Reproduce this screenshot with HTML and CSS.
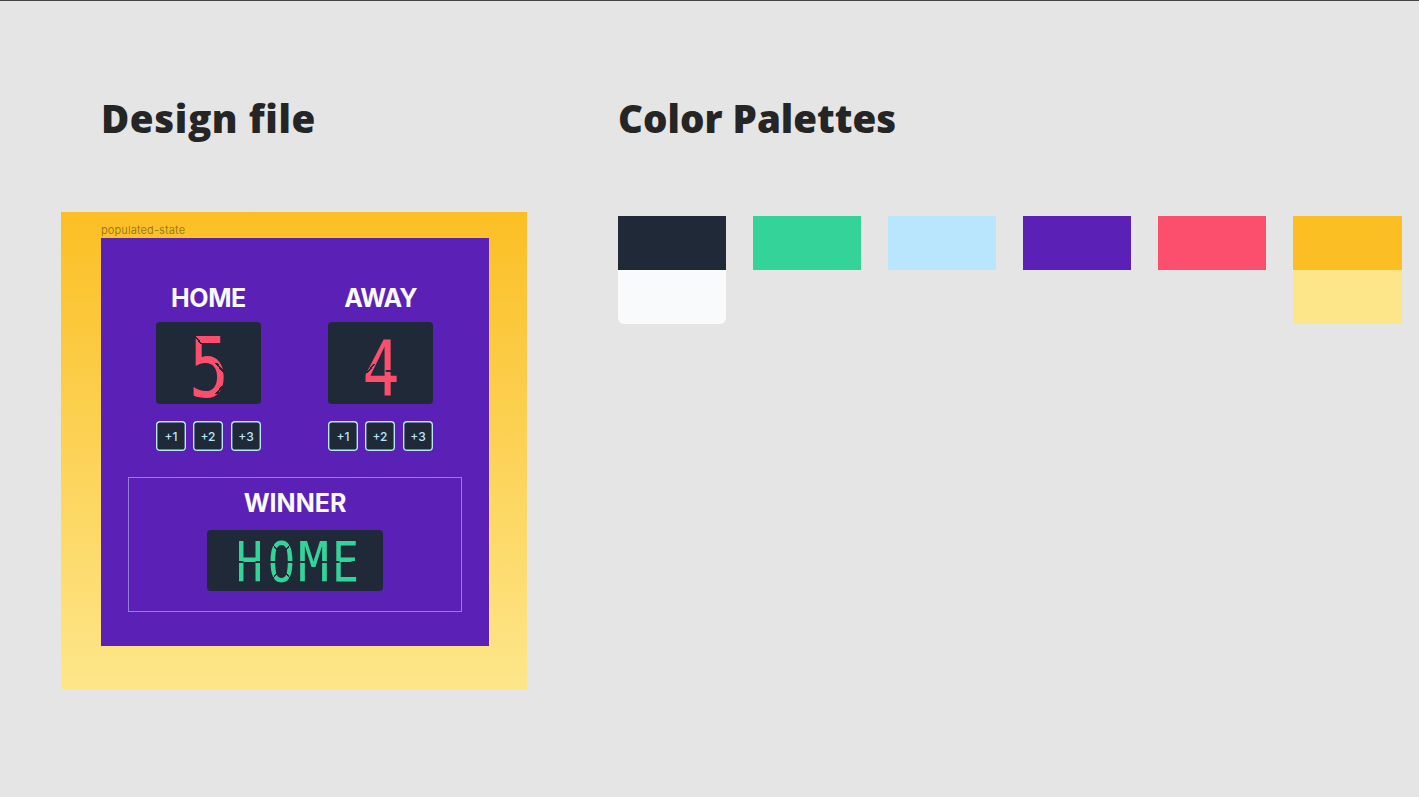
FILE: index.html
```html
<!DOCTYPE html>
<html lang="en">
<head>
<meta charset="utf-8">
<title>Scoreboard design</title>
<link rel="stylesheet" href="styles.css">
</head>
<body>
<main class="page">
  <section class="design">
    <h1 class="heading heading-design">Design file</h1>
    <div class="frame">
      <div class="frame-label">populated-state</div>
      <div class="board">
        <div class="teams">
          <div class="team">
            <h2 class="title home">HOME</h2>
            <div class="score"><span class="cell five">5</span></div>
            <div class="buttons"><button>+1</button><button>+2</button><button>+3</button></div>
          </div>
          <div class="team">
            <h2 class="title away">AWAY</h2>
            <div class="score"><span class="cell four">4</span></div>
            <div class="buttons"><button>+1</button><button>+2</button><button>+3</button></div>
          </div>
        </div>
        <div class="winner">
          <h2 class="title">WINNER</h2>
          <div class="result"><span class="cell split">H</span><span class="cell split corners">O</span><span class="cell split wide">M</span><span class="cell split">E</span></div>
        </div>
      </div>
    </div>
  </section>
  <section class="palettes">
    <h1 class="heading heading-palettes">Color Palettes</h1>
    <div class="swatches">
      <div class="group"><div class="swatch navy"></div><div class="swatch white"></div></div>
      <div class="group"><div class="swatch green"></div></div>
      <div class="group"><div class="swatch sky"></div></div>
      <div class="group"><div class="swatch purple"></div></div>
      <div class="group"><div class="swatch red"></div></div>
      <div class="group"><div class="swatch amber"></div><div class="swatch cream"></div></div>
    </div>
  </section>
</main>
</body>
</html>
```
FILE: styles.css
```css
* { box-sizing: border-box; }
body { margin: 0; background: #e5e5e5; font-family: Inter, sans-serif; }
.page {
  display: grid;
  grid-template-columns: 466px 784px;
  column-gap: 91px;
  height: 797px;
  padding: 92px 0 0 61px;
  border-top: 1px solid #454246;
  overflow: hidden;
}
.heading {
  margin: 0;
  height: 50px;
  font: 800 38.5px/50px "Open Sans", sans-serif;
  color: #252525;
  white-space: nowrap;
}
.heading-design { margin-left: 40px; letter-spacing: 0.6px; }
.heading-palettes { letter-spacing: 0; }
.frame {
  display: flex;
  flex-direction: column;
  width: 466px;
  height: 477px;
  margin-top: 69px;
  padding: 11px 0 0 40px;
  background: linear-gradient(#fbbf24, #fde68a);
}
.frame-label {
  height: 15px;
  font-size: 11px;
  line-height: 14px;
  letter-spacing: 0.1px;
  color: rgba(0, 0, 0, 0.4);
}
.board {
  width: 388px;
  height: 408px;
  padding: 44px 27px 0;
  background: #5b21b6;
}
.teams { display: flex; gap: 67px; margin-left: 28px; }
.team { display: flex; flex-direction: column; align-items: center; width: 105px; }
.title {
  margin: 0;
  font-size: 25px;
  font-weight: 700;
  line-height: 32px;
  color: #f9fafb;
  white-space: nowrap;
}
.home { letter-spacing: -0.4px; }
.away { letter-spacing: -0.9px; }
.score {
  display: flex;
  align-items: center;
  justify-content: center;
  width: 105px;
  height: 82px;
  margin-top: 8px;
  border-radius: 4px;
  background: #1f2937;
}
.buttons { display: flex; justify-content: space-between; width: 105px; margin-top: 17px; }
.buttons button {
  width: 30px;
  height: 30px;
  padding: 0;
  border: none;
  border-radius: 4px;
  box-shadow: inset 0 0 0 1.4px #bae6fd;
  background: #1f2937;
  color: #bae6fd;
  font: 500 12px/29px Inter, sans-serif;
}
.buttons button:nth-child(2) { margin-left: -1px; }
.winner {
  display: flex;
  flex-direction: column;
  align-items: center;
  width: 334px;
  height: 135px;
  margin-top: 26px;
  padding-top: 9px;
  border: 1px solid #967dda;
}
.result {
  display: flex;
  align-items: center;
  gap: 11px;
  width: 176px;
  height: 61px;
  margin-top: 11px;
  padding: 2px 0 0 32px;
  border-radius: 4px;
  background: #1f2937;
}
.cell {
  position: relative;
  display: flex;
  align-items: center;
  justify-content: center;
  width: 21px;
  height: 41px;
  color: #34d399;
  font: 400 56px/41px "DejaVu Sans Mono", monospace;
  transform: scaleX(0.8);
}
.wide { transform: scaleX(0.92); }
.score .cell { width: 38px; height: 62px; color: #fb4f6d; }
.score .five { padding-top: 12px; font-size: 83px; line-height: 62px; }
.score .four { padding-top: 12px; font-size: 77px; line-height: 62px; }
/* dark gaps that split each character into display segments */
.split::after, .score .cell::after {
  content: "";
  position: absolute;
  inset: 0 -4px;
}
.split::after {
  background:
    linear-gradient(#1f2937, #1f2937) left 50% / 7px 2px no-repeat,
    linear-gradient(#1f2937, #1f2937) right 50% / 7px 2px no-repeat;
}
.corners::after {
  background:
    linear-gradient(45deg, transparent 46%, #1f2937 46% 54%, transparent 54%) left top / 12px 12px no-repeat,
    linear-gradient(-45deg, transparent 46%, #1f2937 46% 54%, transparent 54%) right top / 12px 12px no-repeat,
    linear-gradient(-45deg, transparent 46%, #1f2937 46% 54%, transparent 54%) left bottom / 12px 12px no-repeat,
    linear-gradient(45deg, transparent 46%, #1f2937 46% 54%, transparent 54%) right bottom / 12px 12px no-repeat,
    linear-gradient(#1f2937, #1f2937) left 50% / 9px 2px no-repeat,
    linear-gradient(#1f2937, #1f2937) right 50% / 9px 2px no-repeat;
}
.score .five::after {
  background:
    linear-gradient(-135deg, transparent 44%, #1f2937 44% 56%, transparent 56%) 4px 4px / 11px 8px no-repeat,
    linear-gradient(-135deg, transparent 44%, #1f2937 44% 56%, transparent 56%) 30px 31px / 14px 10px no-repeat,
    linear-gradient(135deg, transparent 44%, #1f2937 44% 56%, transparent 56%) 28px 54px / 14px 10px no-repeat;
}
.score .four::after {
  background:
    linear-gradient(#1f2937, #1f2937) 29px 38px / 12px 2px no-repeat,
    linear-gradient(135deg, transparent 44%, #1f2937 44% 56%, transparent 56%) 4px 32px / 12px 9px no-repeat;
}
.swatches { display: flex; gap: 27px; margin-top: 73px; }
.group { width: 108.1px; flex: none; }
.swatch { height: 54px; }
.navy { background: #1f2937; }
.white { background: #f9fafb; border-radius: 0 0 6px 6px; }
.green { background: #34d399; }
.sky { background: #bae6fd; }
.purple { background: #5b21b6; }
.red { background: #fb4f6d; }
.amber { background: #fbbf24; }
.cream { background: #fde68a; }
```
